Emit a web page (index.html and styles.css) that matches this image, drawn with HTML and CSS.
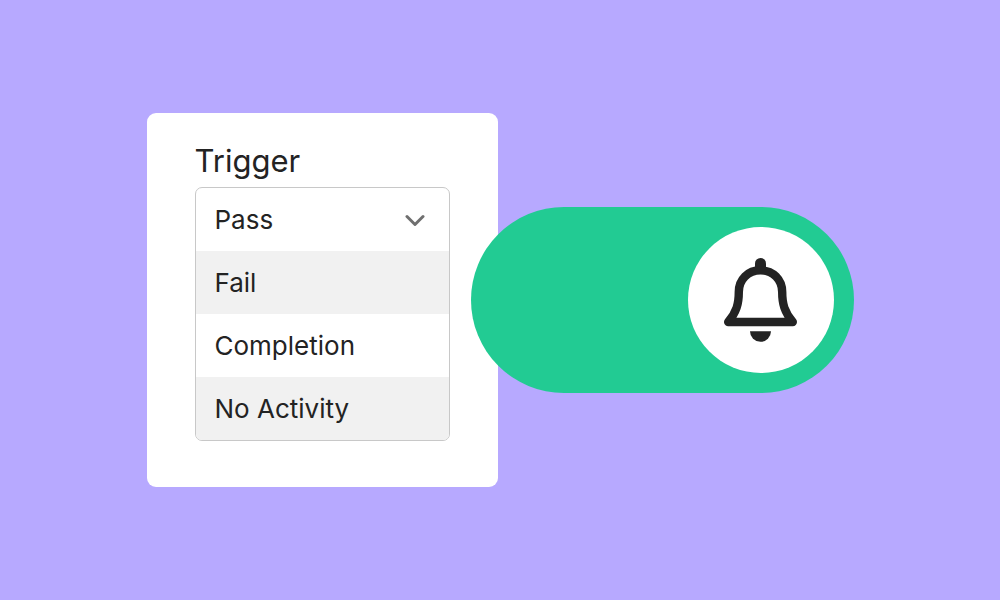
FILE: index.html
```html
<!DOCTYPE html>
<html lang="en">
<head>
    <meta charset="UTF-8">
    <meta name="viewport" content="width=device-width, initial-scale=1.0">
    <title>Notification Trigger</title>
    <link rel="stylesheet" href="styles.css">
</head>
<body>
    <main class="scene">
        <section class="card">
            <label class="card-label" for="trigger">Trigger</label>
            <div class="dropdown">
                <div class="dropdown-head">
                    <select id="trigger" class="dropdown-select">
                        <option>Pass</option>
                        <option>Fail</option>
                        <option>Completion</option>
                        <option>No Activity</option>
                    </select>
                    <svg class="chevron" viewBox="0 0 20 12" aria-hidden="true">
                        <path d="M2 2.5 L10 10.5 L18 2.5"/>
                    </svg>
                </div>
                <ul class="dropdown-list">
                    <li><button type="button" class="dropdown-item">Fail</button></li>
                    <li><button type="button" class="dropdown-item">Completion</button></li>
                    <li><button type="button" class="dropdown-item">No Activity</button></li>
                </ul>
            </div>
        </section>

        <label class="toggle">
            <input type="checkbox" class="toggle-input" aria-label="Notifications" checked>
            <span class="toggle-thumb">
                <svg class="bell" viewBox="0 0 73 84" aria-hidden="true">
                    <path class="bell-knob" d="M36.5 5.5 V10"/>
                    <path class="bell-body" d="M36.5 12.3 C24 12.3 14.8 21.5 14.8 34 C14.8 46 12.5 54 4.2 64 H68.8 C60.5 54 58.2 46 58.2 34 C58.2 21.5 49 12.3 36.5 12.3 Z"/>
                    <path class="bell-clapper" d="M26 73.3 H47 A10.5 10.5 0 0 1 26 73.3 Z"/>
                </svg>
            </span>
        </label>
    </main>

    <script>
        const trigger = document.getElementById('trigger');

        document.querySelectorAll('.dropdown-item').forEach(item => {
            item.addEventListener('click', () => {
                trigger.value = item.textContent;
            });
        });
    </script>
</body>
</html>
```

FILE: styles.css
```css
* {
    box-sizing: border-box;
    margin: 0;
    padding: 0;
    font-family: Inter, "Liberation Sans", sans-serif;
}

body {
    background-color: #b7a9ff;
    color: #232323;
}

.scene {
    display: flex;
    align-items: center;
    justify-content: center;
    min-height: 100vh;
}

.card {
    padding: 28px 48px 46px;
    background-color: white;
    border-radius: 9px;
}

.card-label {
    display: block;
    margin-bottom: 6px;
    font-size: 31px;
    line-height: 40px;
}

.dropdown {
    width: 255px;
    border: 1px solid #c8c8c8;
    border-radius: 7px;
    overflow: hidden;
}

.dropdown-head {
    display: flex;
    align-items: center;
    padding-right: 24px;
}

.dropdown-select {
    flex: 1;
    min-width: 0;
    height: 63px;
    padding-left: 19px;
    border: none;
    background: none;
    appearance: none;
    color: inherit;
    font-size: 26px;
    cursor: pointer;
}

.chevron {
    width: 20px;
    height: 12px;
    fill: none;
    stroke: #6f6f6f;
    stroke-width: 3;
    stroke-linecap: round;
    stroke-linejoin: round;
    pointer-events: none;
}

.dropdown-list {
    list-style: none;
}

.dropdown-list li:nth-child(odd) {
    background-color: #f1f1f1;
}

.dropdown-item {
    display: block;
    width: 100%;
    height: 63px;
    padding-left: 19px;
    border: none;
    background: none;
    color: inherit;
    font-size: 26px;
    text-align: left;
    cursor: pointer;
}

/* the switch overlaps the right edge of the card */
.toggle {
    display: flex;
    justify-content: flex-end;
    width: 383px;
    margin-left: -27px;
    padding: 20px;
    border-radius: 93px;
    background-color: #22cb93;
    cursor: pointer;
}

.toggle:has(.toggle-input:not(:checked)) {
    justify-content: flex-start;
    background-color: #c8c8c8;
}

.toggle-input {
    appearance: none;
    width: 0;
    height: 0;
}

.toggle-thumb {
    display: flex;
    align-items: center;
    justify-content: center;
    width: 146px;
    height: 146px;
    border-radius: 50%;
    background-color: white;
}

.bell {
    width: 73px;
    height: 84px;
}

.bell-knob {
    stroke: #232323;
    stroke-width: 11;
    stroke-linecap: round;
}

.bell-body {
    fill: none;
    stroke: #232323;
    stroke-width: 8.4;
    stroke-linejoin: round;
}

.bell-clapper {
    fill: #232323;
}
```
